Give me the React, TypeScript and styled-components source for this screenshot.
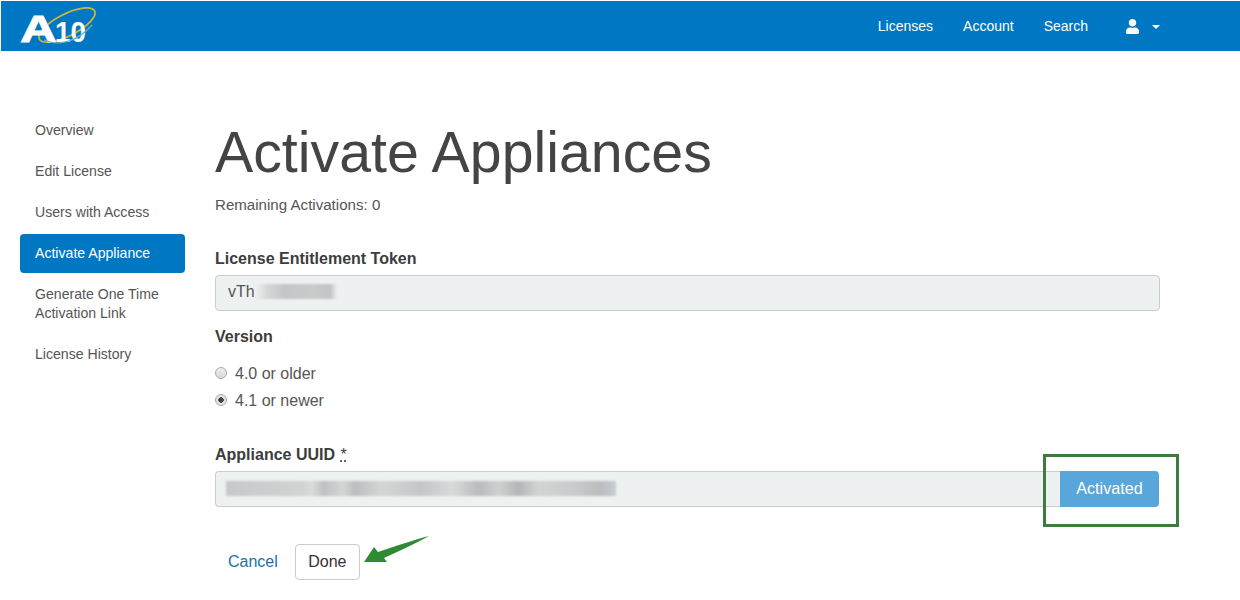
import React from "react";
import styled, { createGlobalStyle } from "styled-components";
import { FaUser } from "react-icons/fa";

const Global = createGlobalStyle`
  html, body { margin: 0; padding: 0; background: #fff; }
  body { font-family: "Liberation Sans", Arial, sans-serif; font-size: 14px; color: #3c3c3c; }
`;

const Page = styled.div`
  position: relative;
  width: 1240px;
  height: 600px;
  overflow: hidden;
  background: #fff;
  padding-top: 1px;
  box-sizing: border-box;
`;

const NavBar = styled.header`
  height: 50px;
  margin-left: 1px;
  background: #0077c3;
  display: flex;
  align-items: center;
  justify-content: space-between;
  padding: 0 80px 0 19px;
`;

const NavLinks = styled.nav`
  display: flex;
  align-items: center;
  gap: 30px;
`;

const NavLink = styled.a`
  color: #fff;
  font-size: 14px;
  line-height: 20px;
`;

const UserMenu = styled.span`
  display: flex;
  align-items: center;
  gap: 12px;
  margin-left: 7px;
  color: #fff;
`;

const Caret = styled.span`
  width: 0;
  height: 0;
  margin-top: 2px;
  border-left: 4px solid transparent;
  border-right: 4px solid transparent;
  border-top: 4px solid #fff;
`;

const Body = styled.div`
  display: flex;
  padding: 60px 80px 0 20px;
`;

const Side = styled.aside`
  width: 165px;
  margin-right: 30px;
  display: flex;
  flex-direction: column;
  gap: 2px;
`;

const Pill = styled.a<{ $active?: boolean }>`
  display: block;
  padding: 10px 15px;
  line-height: 19px;
  border-radius: 4px;
  font-size: 14.1px;
  color: ${(p) => (p.$active ? "#fff" : "#555")};
  background: ${(p) => (p.$active ? "#0077c3" : "transparent")};
`;

const Main = styled.main`
  flex: 1;
  min-width: 0;
`;

const Title = styled.h1`
  margin: 0;
  font-weight: 400;
  font-size: 57.3px;
  line-height: 62px;
  padding-top: 10px;
  color: #444;
`;

const Remaining = styled.p`
  margin: 12px 0 0;
  line-height: 20px;
  font-size: 15.1px;
  color: #555;
`;

const Label = styled.label<{ $top: number }>`
  display: block;
  margin-top: ${(p) => p.$top}px;
  font-size: 16px;
  line-height: 20px;
  font-weight: 700;
  color: #3c3c3c;
`;

const Required = styled.abbr`
  font-weight: 400;
  text-decoration: underline dotted;
  margin-left: 1px;
`;

const Field = styled.div`
  display: flex;
  align-items: center;
  height: 36px;
  margin-top: 7px;
  box-sizing: border-box;
  padding: 0 12px 2px;
  background: #eef1f1;
  border: 1px solid #ccc;
  border-radius: 4px;
  font-size: 16px;
  color: #555;
`;

const Smudge = styled.span<{ $w: number; $stops: string }>`
  display: block;
  width: ${(p) => p.$w}px;
  height: 15px;
  background: linear-gradient(90deg, ${(p) => p.$stops});
  filter: blur(1px);
`;

const TokenField = styled(Field)`
  margin-top: 6px;
  padding-bottom: 3px;
`;

const Radios = styled.div`
  margin-top: 17px;
  display: flex;
  flex-direction: column;
  gap: 7px;
`;

const RadioRow = styled.div`
  display: flex;
  align-items: center;
  gap: 8px;
  height: 20px;
  font-size: 16px;
  color: #555;
`;

const RadioDot = styled.span<{ $on?: boolean }>`
  width: 12px;
  height: 12px;
  margin-bottom: 2px;
  box-sizing: border-box;
  border-radius: 50%;
  border: 1px solid #a9a9a9;
  background: ${(p) =>
    p.$on
      ? "radial-gradient(circle, #444 0 2.5px, #e4e4e4 3px)"
      : "linear-gradient(#eee, #d8d8d8)"};
`;

const Group = styled.div`
  display: flex;
  margin-top: 6px;
  padding-right: 1px;
`;

const GroupField = styled(Field)`
  flex: 1;
  margin-top: 0;
  padding-left: 10px;
  border-right: 0;
  border-radius: 4px 0 0 4px;
`;

const Activated = styled.button`
  width: 99px;
  height: 36px;
  padding: 0 0 2px;
  border: 0;
  border-radius: 0 4px 4px 0;
  background: #59a6da;
  color: #fff;
  font: 16.2px "Liberation Sans", Arial, sans-serif;
`;

const Actions = styled.div`
  display: flex;
  align-items: center;
  gap: 17px;
  margin-top: 37px;
  padding-left: 13px;
`;

const Cancel = styled.a`
  color: #23709f;
  font-size: 16px;
`;

const Done = styled.button`
  width: 65px;
  height: 36px;
  padding: 0;
  background: #fff;
  border: 1px solid #ccc;
  border-radius: 4px;
  color: #333;
  font: 16px "Liberation Sans", Arial, sans-serif;
`;

const Callout = styled.div`
  position: absolute;
  left: 1043px;
  top: 454px;
  width: 136px;
  height: 73px;
  box-sizing: border-box;
  border: 3px solid #3a7d3c;
`;

const Arrow = styled.svg`
  position: absolute;
  left: 360px;
  top: 532px;
`;

const Logo = () => (
  <svg width="80" height="46" viewBox="0 0 80 46" style={{ display: "block" }}>
    <ellipse cx="47" cy="22" rx="31" ry="11" transform="rotate(-27 47 22)" fill="none" stroke="#c9b73c" strokeWidth="1.8" />
    <text x="0" y="39" fontFamily="Liberation Sans" fontWeight="900" fontSize="37" fill="#fff" stroke="#fff" strokeWidth="0.8" textLength="37" lengthAdjust="spacingAndGlyphs">A</text>
    <text x="35" y="39" fontFamily="Liberation Sans" fontWeight="700" fontSize="29" fill="#fff" textLength="31" lengthAdjust="spacingAndGlyphs">10</text>
    <path d="M24 37 C40 44 58 38 72 22" fill="none" stroke="#6fb0bb" strokeWidth="1.2" />
  </svg>
);

export default function App() {
  return (
    <Page>
      <Global />
      <NavBar>
        <Logo />
        <NavLinks>
          <NavLink>Licenses</NavLink>
          <NavLink>Account</NavLink>
          <NavLink>Search</NavLink>
          <UserMenu>
            <FaUser size={15} />
            <Caret />
          </UserMenu>
        </NavLinks>
      </NavBar>
      <Body>
        <Side>
          <Pill>Overview</Pill>
          <Pill>Edit License</Pill>
          <Pill>Users with Access</Pill>
          <Pill $active>Activate Appliance</Pill>
          <Pill>Generate One Time Activation Link</Pill>
          <Pill>License History</Pill>
        </Side>
        <Main>
          <Title>Activate Appliances</Title>
          <Remaining>Remaining Activations: 0</Remaining>
          <Label $top={34}>License Entitlement Token</Label>
          <TokenField>
            vTh
            <Smudge $w={82} $stops="#eef1f1, #d5d7d7 15%, #c4c7c7 35%, #c9cbcb 70%, #c2c5c5 92%, #eef1f1" />
          </TokenField>
          <Label $top={16}>Version</Label>
          <Radios>
            <RadioRow>
              <RadioDot />
              4.0 or older
            </RadioRow>
            <RadioRow>
              <RadioDot $on />
              4.1 or newer
            </RadioRow>
          </Radios>
          <Label $top={34}>
            Appliance UUID <Required>*</Required>
          </Label>
          <Group>
            <GroupField>
              <Smudge
                $w={390}
                $stops="#c6c9c9, #d2d4d4 20%, #d9dbdb 22%, #bfc2c2 25%, #d4d6d6 30%, #bcbfbf 33%, #d4d6d6 40%, #c4c7c7 50%, #d8dada 58%, #b9bcbc 65%, #cfd1d1 70%, #b4b7b7 75%, #d2d4d4 80%, #c8cbcb 90%, #bbb 96%, #c6ced4"
              />
            </GroupField>
            <Activated>Activated</Activated>
          </Group>
          <Actions>
            <Cancel>Cancel</Cancel>
            <Done>Done</Done>
          </Actions>
        </Main>
      </Body>
      <Callout />
      <Arrow width="72" height="36" viewBox="0 0 72 36">
        <path d="M4 30 L14 15 L18 20 C36 14 54 8 69 4 C56 11 40 19 24 26 L27 30 Z" fill="#2f8a34" />
      </Arrow>
    </Page>
  );
}
